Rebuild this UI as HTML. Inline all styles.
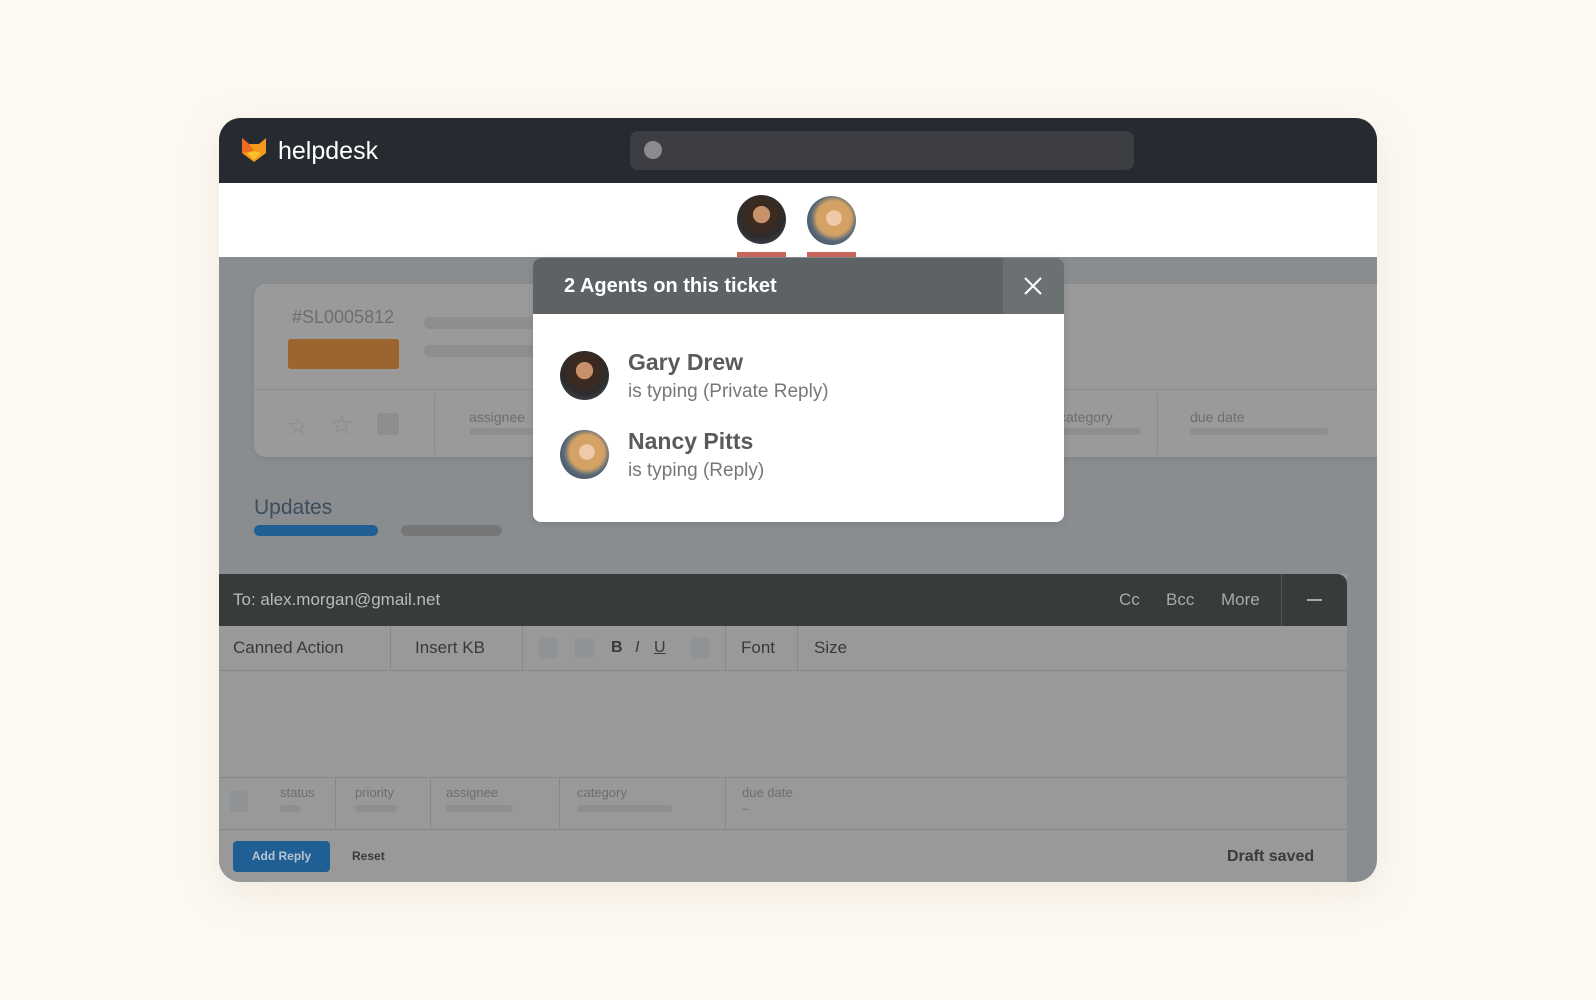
<!DOCTYPE html><html><head><style>
*{margin:0;padding:0;box-sizing:border-box}
body{width:1596px;height:1000px;background:#fdf9f2;font-family:"Liberation Sans",sans-serif;position:relative;overflow:hidden}
.a{position:absolute}
.win{left:219px;top:118px;width:1158px;height:764px;border-radius:22px;overflow:hidden;background:#8a8d90;box-shadow:0 10px 40px rgba(180,160,130,.18)}
.bar{border-radius:6px;background:#8e8e8e;height:9px}
.t{color:#6e6e6e}
.av1{border-radius:50%;background:radial-gradient(circle at 50% 40%,#c9916a 0 22%,#3a2a20 23% 40%,#2c2c2e 60%,#4a5560 100%)}
.av2{border-radius:50%;background:radial-gradient(circle at 55% 45%,#f0c9a8 0 20%,#d4a264 21% 45%,#5a6a78 60%,#2d3a48 100%)}
.v{position:absolute;width:1px;background:#888}
</style></head><body>
<div class="a win">
 <div class="a" style="left:0;top:0;width:1158px;height:65px;background:#272a31"></div>
 <svg class="a" style="left:22px;top:19px" width="26" height="26" viewBox="0 0 26 26"><path d="M1 1 L8 7 L18 7 L25 1 L25 16 L13 25 L1 16Z" fill="#f39a1c"/><path d="M1 1 L8 7 L13 14 L1 16Z" fill="#f06a1e"/><path d="M6 16 L13 14 L20 16 L13 23Z" fill="#fbc02d"/></svg>
 <div class="a" style="left:59px;top:19px;font-size:25px;color:#fff">helpdesk</div>
 <div class="a" style="left:411px;top:13px;width:504px;height:39px;border-radius:8px;background:#3c3e44"></div>
 <div class="a" style="left:425px;top:23px;width:18px;height:18px;border-radius:50%;background:#8a8b90"></div>
 <div class="a" style="left:0;top:65px;width:1158px;height:74px;background:#fff"></div>
 <div class="a av1" style="left:518px;top:77px;width:49px;height:49px"></div>
 <div class="a av2" style="left:588px;top:78px;width:49px;height:49px"></div>
 <div class="a" style="left:518px;top:134px;width:49px;height:5px;background:#c9675d"></div>
 <div class="a" style="left:588px;top:134px;width:49px;height:5px;background:#c9675d"></div>
 <div class="a" style="left:35px;top:166px;width:1123px;height:173px;background:#9a9a9a;border-radius:12px 0 0 12px;box-shadow:0 2px 6px rgba(0,0,0,.08)"></div>
 <div class="a" style="left:35px;top:271px;width:1123px;height:1px;background:#8c8c8c"></div>
 <div class="a t" style="left:73px;top:189px;font-size:18px">#SL0005812</div>
 <div class="a" style="left:69px;top:221px;width:111px;height:30px;border-radius:3px;background:#9c642e"></div>
 <div class="a bar" style="left:205px;top:199px;width:120px;height:12px"></div>
 <div class="a bar" style="left:205px;top:227px;width:120px;height:12px"></div>
 <div class="a" style="left:68px;top:294px;font-size:24px;color:#888">☆</div>
 <div class="a" style="left:110px;top:290px;font-size:28px;color:#888">☆</div>
 <div class="a" style="left:158px;top:295px;width:22px;height:22px;border-radius:3px;background:#8e8e8e"></div>
 <div class="v" style="left:215px;top:276px;height:60px;background:#8c8c8c"></div>
 <div class="a t" style="left:250px;top:291px;font-size:14px">assignee</div>
 <div class="a bar" style="left:250px;top:310px;width:80px;height:7px"></div>
 <div class="a t" style="left:840px;top:291px;font-size:14px">category</div>
 <div class="a bar" style="left:840px;top:310px;width:82px;height:7px"></div>
 <div class="v" style="left:938px;top:276px;height:60px;background:#8c8c8c"></div>
 <div class="a t" style="left:971px;top:291px;font-size:14px">due date</div>
 <div class="a bar" style="left:971px;top:310px;width:138px;height:7px"></div>
 <div class="a" style="left:35px;top:378px;font-size:21px;color:#3d4d5c">Updates</div>
 <div class="a" style="left:35px;top:407px;width:124px;height:11px;border-radius:6px;background:#1f5f93"></div>
 <div class="a" style="left:182px;top:407px;width:101px;height:11px;border-radius:6px;background:#777"></div>
 <div class="a" style="left:0;top:456px;width:1128px;height:308px;background:#999"></div>
 <div class="a" style="left:0;top:456px;width:1128px;height:52px;background:#363b3b;border-radius:0 10px 0 0"></div>
 <div class="a" style="left:14px;top:472px;font-size:17px;color:#bbb">To: alex.morgan@gmail.net</div>
 <div class="a" style="left:900px;top:472px;font-size:17px;color:#aaa">Cc</div>
 <div class="a" style="left:947px;top:472px;font-size:17px;color:#aaa">Bcc</div>
 <div class="a" style="left:1002px;top:472px;font-size:17px;color:#aaa">More</div>
 <div class="v" style="left:1062px;top:456px;height:52px;background:#555"></div>
 <div class="a" style="left:1088px;top:481px;width:15px;height:2px;background:#aaa"></div>
 <div class="a" style="left:0;top:552px;width:1128px;height:1px;background:#888"></div>
 <div class="a" style="left:0;top:659px;width:1128px;height:1px;background:#888"></div>
 <div class="a" style="left:0;top:711px;width:1128px;height:1px;background:#888"></div>
 <div class="a" style="left:14px;top:520px;font-size:17px;color:#3a3a3a">Canned Action</div>
 <div class="v" style="left:171px;top:508px;height:44px"></div>
 <div class="a" style="left:196px;top:520px;font-size:17px;color:#3a3a3a">Insert KB</div>
 <div class="v" style="left:303px;top:508px;height:44px"></div>
 <div class="a" style="left:320px;top:520px;width:19px;height:20px;border-radius:3px;background:#8f9396"></div>
 <div class="a" style="left:356px;top:520px;width:19px;height:20px;border-radius:3px;background:#8f9396"></div>
 <div class="a" style="left:392px;top:521px;font-size:16px;color:#3a3a3a;font-weight:bold">B</div>
 <div class="a" style="left:416px;top:521px;font-size:16px;color:#3a3a3a;font-style:italic">I</div>
 <div class="a" style="left:435px;top:521px;font-size:16px;color:#3a3a3a;text-decoration:underline">U</div>
 <div class="a" style="left:472px;top:520px;width:19px;height:20px;border-radius:3px;background:#8f9396"></div>
 <div class="v" style="left:506px;top:508px;height:44px"></div>
 <div class="a" style="left:522px;top:520px;font-size:17px;color:#3a3a3a">Font</div>
 <div class="v" style="left:578px;top:508px;height:44px"></div>
 <div class="a" style="left:595px;top:520px;font-size:17px;color:#3a3a3a">Size</div>
 <div class="a" style="left:11px;top:673px;width:18px;height:21px;border-radius:3px;background:#8f9396"></div>
 <div class="a t" style="left:61px;top:667px;font-size:13px">status</div>
 <div class="a bar" style="left:61px;top:687px;width:20px;height:7px"></div>
 <div class="v" style="left:116px;top:660px;height:51px"></div>
 <div class="a t" style="left:136px;top:667px;font-size:13px">priority</div>
 <div class="a bar" style="left:136px;top:687px;width:42px;height:7px"></div>
 <div class="v" style="left:211px;top:660px;height:51px"></div>
 <div class="a t" style="left:227px;top:667px;font-size:13px">assignee</div>
 <div class="a bar" style="left:227px;top:687px;width:67px;height:7px"></div>
 <div class="v" style="left:340px;top:660px;height:51px"></div>
 <div class="a t" style="left:358px;top:667px;font-size:13px">category</div>
 <div class="a bar" style="left:358px;top:687px;width:95px;height:7px"></div>
 <div class="v" style="left:506px;top:660px;height:51px"></div>
 <div class="a t" style="left:523px;top:667px;font-size:13px">due date</div>
 <div class="a t" style="left:523px;top:686px;font-size:11px">~</div>
 <div class="a" style="left:14px;top:723px;width:97px;height:31px;border-radius:4px;background:#1f5f93;color:#b8c5d2;font-size:12px;font-weight:bold;text-align:center;line-height:31px">Add Reply</div>
 <div class="a" style="left:133px;top:731px;font-size:12px;color:#3a3a3a;font-weight:bold">Reset</div>
 <div class="a" style="left:1008px;top:730px;font-size:16px;color:#3a3a3a;font-weight:bold">Draft saved</div>
</div>
<div class="a" style="left:533px;top:258px;width:531px;height:264px;background:#fff;border-radius:8px;overflow:hidden;box-shadow:0 2px 8px rgba(0,0,0,.1)">
 <div class="a" style="left:0;top:0;width:531px;height:56px;background:#5d6265"></div>
 <div class="a" style="left:470px;top:0;width:61px;height:56px;background:#6b7073"></div>
 <div class="a" style="left:31px;top:17px;font-size:20px;color:#fff;font-weight:bold">2 Agents on this ticket</div>
 <svg class="a" style="left:490px;top:18px" width="20" height="20"><path d="M2 2L18 18M18 2L2 18" stroke="#fff" stroke-width="2"/></svg>
 <div class="a av1" style="left:27px;top:93px;width:49px;height:49px"></div>
 <div class="a" style="left:95px;top:91px;font-size:23px;color:#5a5a5a;font-weight:bold">Gary Drew</div>
 <div class="a" style="left:95px;top:123px;font-size:19px;color:#777">is typing (Private Reply)</div>
 <div class="a av2" style="left:27px;top:172px;width:49px;height:49px"></div>
 <div class="a" style="left:95px;top:170px;font-size:23px;color:#5a5a5a;font-weight:bold">Nancy Pitts</div>
 <div class="a" style="left:95px;top:202px;font-size:19px;color:#777">is typing (Reply)</div>
</div>
</body></html>
